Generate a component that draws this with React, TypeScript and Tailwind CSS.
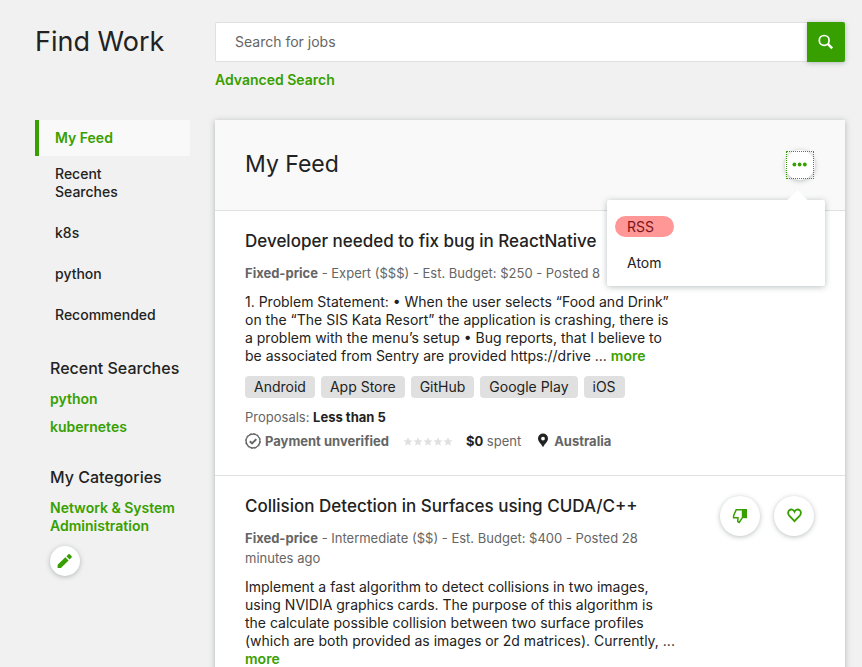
import type { ReactNode } from "react";

const navItems = ["My Feed", "Recent Searches", "k8s", "python", "Recommended"];
const tags = ["Android", "App Store", "GitHub", "Google Play", "iOS"];

const roundButton =
  "flex shrink-0 items-center justify-center rounded-full bg-white text-[#37a000] shadow-[0_1px_5px_rgba(57,73,76,0.35)]";

function SearchIcon() {
  return (
    <svg viewBox="0 0 16 16" className="size-4" fill="none" stroke="currentColor" aria-hidden="true">
      <circle cx="6.2" cy="6.4" r="4.9" strokeWidth="1.7" />
      <path d="M9.7 9.9l4.500 4.500" strokeWidth="2.4" />
    </svg>
  );
}

function DotsIcon() {
  return (
    <svg viewBox="0 0 16 16" className="size-4" fill="currentColor" aria-hidden="true">
      <circle cx="2.4" cy="7.5" r="1.9" />
      <circle cx="7.6" cy="7.5" r="1.9" />
      <circle cx="12.8" cy="7.5" r="1.9" />
    </svg>
  );
}

function PencilIcon() {
  return (
    <svg viewBox="0 0 16 16" className="size-4" fill="currentColor" aria-hidden="true">
      <path d="M.6 11.8v3.300h3.300l7.700-7.500-3.300-3.300z" />
      <path d="M9.4 3.3l3.200 3.200 1.900-1.900c.5-.5.5-1.200 0-1.700L13 1.400c-.5-.5-1.200-.5-1.700 0z" />
    </svg>
  );
}

function ThumbDownIcon() {
  return (
    <svg viewBox="0 0 16 16" className="size-4" fill="none" stroke="currentColor" aria-hidden="true">
      <path d="M10.2 1.8H4.2L1.6 7.6V9.8H6L5.7 13.6L7.2 14.4L10.2 9.8" strokeWidth="1.5" />
      <path d="M9.8 1H15v9.200H9.800z" fill="currentColor" stroke="none" />
    </svg>
  );
}

function HeartIcon() {
  return (
    <svg viewBox="0 0 16 16" className="size-4" fill="none" stroke="currentColor" strokeWidth="1.8" aria-hidden="true">
      <path d="M8.500 13.200L3.200 7.600C1.700 5.900 1.700 3.400 3.300 2.200C5 .9 7.400 1.400 8.500 3.700C9.600 1.400 12 .9 13.700 2.200C15.300 3.400 15.300 5.900 13.800 7.600Z" />
    </svg>
  );
}

function VerifiedIcon() {
  return (
    <svg viewBox="0 0 16 16" className="size-4" fill="none" stroke="currentColor" aria-hidden="true">
      <circle cx="8" cy="8" r="6.9" strokeWidth="1.3" />
      <circle cx="8" cy="8" r="7.5" strokeWidth="0.9" strokeDasharray="2.4 1.52" />
      <path d="M4.8 8.200l2.300 2.200 4.200-4.300" strokeWidth="2" />
    </svg>
  );
}

function StarIcon() {
  return (
    <svg viewBox="0 0 10 10" className="size-[10px]" fill="currentColor" aria-hidden="true">
      <path d="M5 1.200l1.300 3 3.200.3-2.400 2.100.7 3.200L5 8.100 2.200 9.800l.7-3.200L.5 4.500l3.200-.3z" />
    </svg>
  );
}

function PinIcon() {
  return (
    <svg viewBox="0 0 12 16" className="h-4 w-3 text-[#222]" fill="currentColor" aria-hidden="true">
      <path fillRule="evenodd" d="M6 .5a5 5 0 0 0-5 5c0 3.200 3.200 5 5 8.800 1.800-3.800 5-5.600 5-8.800a5 5 0 0 0-5-5zm0 3.200a1.900 1.900 0 1 1 0 3.800 1.900 1.900 0 0 1 0-3.800z" />
    </svg>
  );
}

function GreenLink({ children }: { children: ReactNode }) {
  return (
    <a href="#" className="font-semibold text-[#37a000]">
      {children}
    </a>
  );
}

function FeedMenu() {
  return (
    <div className="relative text-sm leading-[18px]">
      <button type="button" aria-label="Feed options" aria-expanded="true" className={`${roundButton} relative size-[30px]`}>
        <DotsIcon />
        <span className="absolute inset-px border border-dotted border-[#37a000]" />
      </button>
      <div className="absolute top-[50px] right-[-10px] z-10 w-[218px] rounded-xs bg-white pt-[9px] pb-[5px] shadow-[0_1px_6px_rgba(57,73,76,0.35)]">
        <span className="absolute top-[-7px] right-5 size-[15px] rotate-45 bg-white" />
        <a href="#" className="relative flex h-9 items-center px-5 text-[#7c1418]">
          <span className="absolute top-[7px] left-2 h-[21px] w-[59px] rounded-full bg-[#ff9797]" />
          <span className="relative">RSS</span>
        </a>
        <a href="#" className="flex h-9 items-center px-5">
          Atom
        </a>
      </div>
    </div>
  );
}

export default function App() {
  return (
    <div className="min-h-screen bg-[#f1f1f1] pt-[22px] pr-[17px] pl-[35px] font-['Inter','Liberation_Sans',sans-serif] text-[13px] leading-[18px] text-[#222]">
      <header className="flex gap-[25px]">
        <h1 className="w-[155px] shrink-0 text-[27px] leading-10 whitespace-nowrap">Find Work</h1>
        <div className="min-w-0 flex-1 text-sm leading-[18px]">
          <form className="flex h-10" onSubmit={(e) => e.preventDefault()}>
            <input
              type="search"
              aria-label="Search for jobs"
              placeholder="Search for jobs"
              className="min-w-0 flex-1 rounded-l-xs border border-r-0 border-[#e0e0e0] bg-white px-[19px] outline-none placeholder:text-[#656565]"
            />
            <button type="submit" aria-label="Search" className="flex w-[38px] items-center justify-center rounded-r-xs bg-[#37a000] text-white shadow-[0_1px_5px_rgba(57,73,76,0.35)]">
              <SearchIcon />
            </button>
          </form>
          <p className="mt-[9px]">
            <GreenLink>Advanced Search</GreenLink>
          </p>
        </div>
      </header>

      <div className="mt-[31px] flex gap-[25px]">
        <aside className="w-[155px] shrink-0 text-sm leading-[18px]">
          <nav>
            <ul className="space-y-[5px]">
              {navItems.map((item, i) => (
                <li key={item} className={i === 1 ? "-mt-[5px]" : ""}>
                  <a
                    href="#"
                    className={
                      i === 0
                        ? "block rounded-r-xs border-l-4 border-[#37a000] bg-[#f9f9f9] py-[9px] pr-10 pl-4 font-semibold text-[#37a000]"
                        : "block border-l-4 border-transparent py-[9px] pr-6 pl-4 font-medium"
                    }
                  >
                    {item}
                  </a>
                </li>
              ))}
            </ul>
          </nav>
          <section className="mt-[25px] pl-[15px]">
            <h2 className="text-base leading-5 font-medium whitespace-nowrap">Recent Searches</h2>
            <ul className="mt-3 space-y-[10px]">
              <li><GreenLink>python</GreenLink></li>
              <li><GreenLink>kubernetes</GreenLink></li>
            </ul>
          </section>
          <section className="mt-[31px] pl-[15px]">
            <h2 className="text-base leading-5 font-medium whitespace-nowrap">My Categories</h2>
            <p className="mt-3"><GreenLink>Network &amp; System Administration</GreenLink></p>
            <button type="button" aria-label="Edit categories" className={`${roundButton} mt-[11px] size-[30px]`}>
              <PencilIcon />
            </button>
          </section>
        </aside>

        <main className="min-w-0 flex-1 bg-white shadow-[0_1px_6px_rgba(57,73,76,0.35)]">
          <div className="flex items-start justify-between border-b border-[#e0e0e0] bg-[#f9f9f9] px-[30px] py-[30px]">
            <h2 className="text-[23px] leading-7">My Feed</h2>
            <FeedMenu />
          </div>

          <article className="border-b border-[#e0e0e0] px-[30px] pt-5 pb-[25px]">
            <h3 className="text-[17px] leading-5 font-medium">Developer needed to fix bug in ReactNative</h3>
            <p className="mt-3 leading-5 text-[#656565]">
              <strong>Fixed-price</strong> - Expert ($$$) - Est. Budget: $250 - Posted 8
            </p>
            <p className="mt-[10px] text-sm leading-[18px]">
              1. Problem Statement: • When the user selects “Food and Drink”<br />
              on the “The SIS Kata Resort” the application is crashing, there is<br />
              a problem with the menu’s setup • Bug reports, that I believe to<br />
              be associated from Sentry are provided https://drive ... <GreenLink>more</GreenLink>
            </p>
            <ul className="mt-[11px] flex gap-[6px] text-sm leading-[18px]">
              {tags.map((tag) => (
                <li key={tag}>
                  <a href="#" className="block rounded-sm bg-[#e0e0e0] px-[9px] py-[2px]">{tag}</a>
                </li>
              ))}
            </ul>
            <p className="mt-[10px] text-[#656565]">
              Proposals: <strong className="text-[#222]">Less than 5</strong>
            </p>
            <div className="mt-[6px] flex items-center text-[#656565]">
              <VerifiedIcon />
              <strong className="ml-1">Payment unverified</strong>
              <span className="ml-[14px] flex text-[#e0e0e0]" role="img" aria-label="No rating">
                <StarIcon /><StarIcon /><StarIcon /><StarIcon /><StarIcon />
              </span>
              <span className="ml-[13px]"><strong className="text-[#222]">$0</strong> spent</span>
              <span className="ml-4 flex items-center gap-[5px]"><PinIcon /><strong>Australia</strong></span>
            </div>
          </article>

          <article className="flex justify-between pt-5 pr-[31px] pb-[25px] pl-[30px]">
            <div>
              <h3 className="text-[17px] leading-5 font-medium">Collision Detection in Surfaces using CUDA/C++</h3>
              <p className="mt-3 leading-5 text-[#656565]">
                <strong>Fixed-price</strong> - Intermediate ($$) - Est. Budget: $400 - Posted 28<br />minutes ago
              </p>
              <p className="mt-[10px] text-sm leading-[18px]">
                Implement a fast algorithm to detect collisions in two images,<br />
                using NVIDIA graphics cards. The purpose of this algorithm is<br />
                the calculate possible collision between two surface profiles<br />
                (which are both provided as images or 2d matrices). Currently, ...<br />
                <GreenLink>more</GreenLink>
              </p>
            </div>
            <div className="flex gap-[14px]">
              <button type="button" aria-label="Not interested" className={`${roundButton} size-10`}>
                <ThumbDownIcon />
              </button>
              <button type="button" aria-label="Save job" className={`${roundButton} size-10`}>
                <HeartIcon />
              </button>
            </div>
          </article>
        </main>
      </div>
    </div>
  );
}
